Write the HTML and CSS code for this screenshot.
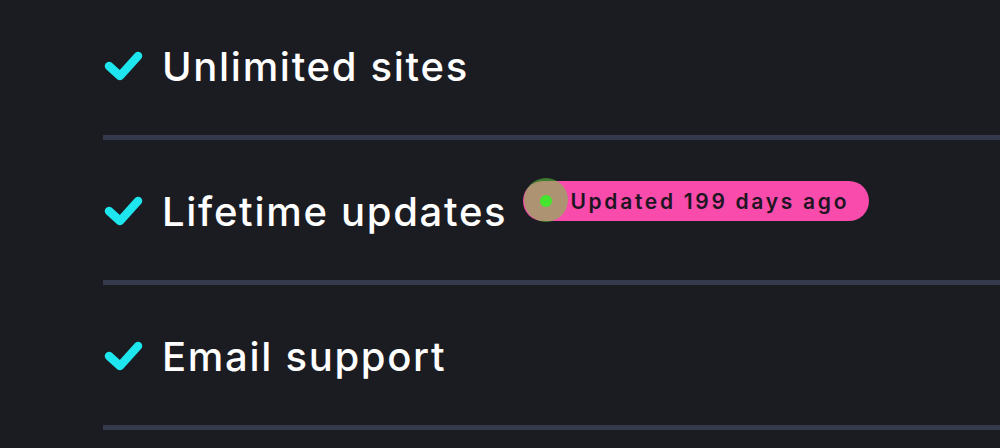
FILE: index.html
```html
<!DOCTYPE html>
<html lang="en">
<head>
<meta charset="utf-8">
<title>Features</title>
<link rel="stylesheet" href="styles.css">
</head>
<body>
<ul class="features">
  <li class="feature">
    <svg class="check" viewBox="0 0 40 32" width="40" height="32" aria-hidden="true"><path d="M6 17 L17 27 L35 7" fill="none" stroke="#1de6ee" stroke-width="8.5" stroke-linecap="round" stroke-linejoin="round"/></svg>
    <span class="label">Unlimited sites</span>
  </li>
  <li class="feature">
    <svg class="check" viewBox="0 0 40 32" width="40" height="32" aria-hidden="true"><path d="M6 17 L17 27 L35 7" fill="none" stroke="#1de6ee" stroke-width="8.5" stroke-linecap="round" stroke-linejoin="round"/></svg>
    <span class="label">Lifetime updates</span>
    <span class="badge"><span class="dot"></span><span class="badge-text">Updated 199 days ago</span></span>
  </li>
  <li class="feature">
    <svg class="check" viewBox="0 0 40 32" width="40" height="32" aria-hidden="true"><path d="M6 17 L17 27 L35 7" fill="none" stroke="#1de6ee" stroke-width="8.5" stroke-linecap="round" stroke-linejoin="round"/></svg>
    <span class="label">Email support</span>
  </li>
</ul>
</body>
</html>
```

FILE: styles.css
```css
html, body {
  margin: 0;
  padding: 0;
  background: #1b1c22;
  height: 100%;
  overflow: hidden;
}

.features {
  list-style: none;
  margin: -5px 0 0 0;
  padding: 0 0 0 103px;
  font-family: Inter, "Noto Sans", sans-serif;
}

.feature {
  display: flex;
  align-items: center;
  height: 140px;
  border-bottom: 5px solid #343a4b;
}

.check {
  display: block;
  flex: none;
  margin-right: 19px;
}

.label {
  color: #ffffff;
  font-size: 40px;
  font-weight: 500;
  letter-spacing: 1.7px;
  line-height: 1;
  padding-top: 4px;
}

.badge {
  display: flex;
  align-items: center;
  height: 40px;
  margin-left: 16px;
  margin-bottom: 18px;
  padding: 0 20px 0 17px;
  border-radius: 20px;
  background: #f84bab;
}

.dot {
  position: relative;
  width: 12px;
  height: 12px;
  border-radius: 50%;
  background: #22f01e;
  flex: none;
}

.dot::before {
  content: "";
  position: absolute;
  left: -16px;
  top: -17px;
  width: 44px;
  height: 44px;
  border-radius: 50%;
  background: rgba(100, 220, 60, 0.5);
}

.badge-text {
  position: relative;
  margin-left: 18px;
  color: #1d1522;
  font-size: 21px;
  font-weight: 600;
  letter-spacing: 2.7px;
  line-height: 1;
}
```
